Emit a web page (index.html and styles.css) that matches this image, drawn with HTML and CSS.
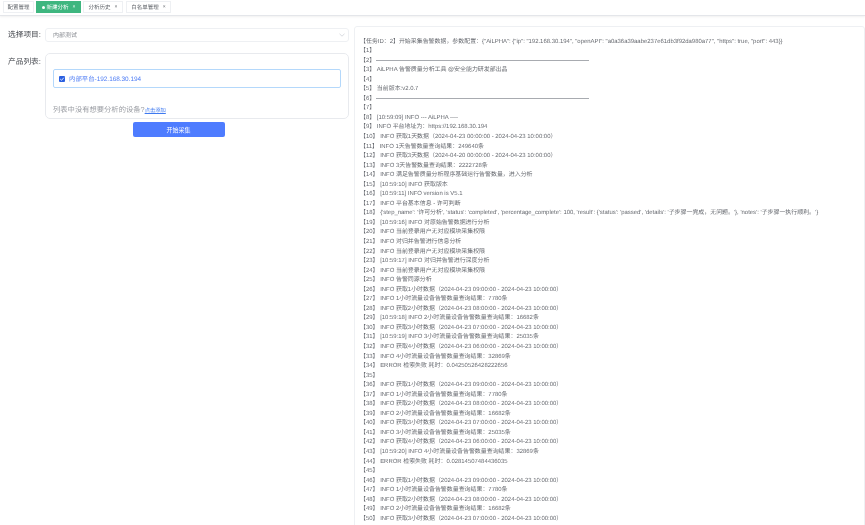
FILE: index.html
```html
<!DOCTYPE html>
<html lang="zh">
<head>
<meta charset="utf-8">
<title>新建分析</title>
<link rel="stylesheet" href="styles.css">
</head>
<body>
<nav class="tabs">
  <div class="tab tab-plain">配置管理</div>
  <div class="tab tab-active"><span class="dot"></span>新建分析<span class="close">×</span></div>
  <div class="tab">分析历史<span class="close">×</span></div>
  <div class="tab">白名单管理<span class="close">×</span></div>
</nav>
<main class="content">
  <section class="left">
    <div class="field">
      <label class="label">选择项目:</label>
      <div class="select">
        <span>内部测试</span>
        <svg class="chev" width="6" height="4" viewBox="0 0 6 4"><path d="M0.5 0.8 L3 3.2 L5.5 0.8" fill="none" stroke="#c0c4cc" stroke-width="0.6"/></svg>
      </div>
    </div>
    <div class="field field-list">
      <label class="label">产品列表:</label>
      <div class="list">
        <div class="item">
          <span class="check"><svg width="6" height="6" viewBox="0 0 6 6"><path d="M1.2 3 L2.6 4.3 L4.8 1.7" fill="none" stroke="#fff" stroke-width="0.8"/></svg></span>
          <span class="item-text">内部平台-192.168.30.194</span>
        </div>
        <div class="hint">列表中没有想要分析的设备?<a class="link">点击添加</a></div>
      </div>
    </div>
    <div class="actions"><button class="btn">开始采集</button></div>
  </section>
  <section class="log">
    <div>【任务ID：2】开始采集告警数据，参数配置：{"AiLPHA": {"ip": "192.168.30.194", "openAPI": "a0a36a39aabe237e61db3f92da980a77", "https": true, "port": 443}}</div>
    <div>【1】</div>
    <div>【2】<span class="rule"></span></div>
    <div>【3】 AiLPHA 告警质量分析工具 @安全能力研发部出品</div>
    <div>【4】</div>
    <div>【5】 当前版本:v2.0.7</div>
    <div>【6】<span class="rule"></span></div>
    <div>【7】</div>
    <div>【8】 [10:59:09] INFO --- AiLPHA ----</div>
    <div>【9】 INFO 平台地址为：https://192.168.30.194</div>
    <div>【10】 INFO 获取1天数据（2024-04-23 00:00:00 - 2024-04-23 10:00:00）</div>
    <div>【11】 INFO 1天告警数量查询结果：249640条</div>
    <div>【12】 INFO 获取3天数据（2024-04-20 00:00:00 - 2024-04-23 10:00:00）</div>
    <div>【13】 INFO 3天告警数量查询结果：2222728条</div>
    <div>【14】 INFO 满足告警质量分析程序基础运行告警数量，进入分析</div>
    <div>【15】 [10:59:10] INFO 获取版本</div>
    <div>【16】 [10:59:11] INFO version is V5.1</div>
    <div>【17】 INFO 平台基本信息 - 许可判断</div>
    <div>【18】 {'step_name': '许可分析', 'status': 'completed', 'percentage_complete': 100, 'result': {'status': 'passed', 'details': '子步骤一完成，无问题。'}, 'notes': '子步骤一执行顺利。'}</div>
    <div>【19】 [10:59:16] INFO 对原始告警数据进行分析</div>
    <div>【20】 INFO 当前登录用户无对应模块采集权限</div>
    <div>【21】 INFO 对归并告警进行信息分析</div>
    <div>【22】 INFO 当前登录用户无对应模块采集权限</div>
    <div>【23】 [10:59:17] INFO 对归并告警进行深度分析</div>
    <div>【24】 INFO 当前登录用户无对应模块采集权限</div>
    <div>【25】 INFO 告警同源分析</div>
    <div>【26】 INFO 获取1小时数据（2024-04-23 09:00:00 - 2024-04-23 10:00:00）</div>
    <div>【27】 INFO 1小时流量设备告警数量查询结果：7780条</div>
    <div>【28】 INFO 获取2小时数据（2024-04-23 08:00:00 - 2024-04-23 10:00:00）</div>
    <div>【29】 [10:59:18] INFO 2小时流量设备告警数量查询结果：16682条</div>
    <div>【30】 INFO 获取3小时数据（2024-04-23 07:00:00 - 2024-04-23 10:00:00）</div>
    <div>【31】 [10:59:19] INFO 3小时流量设备告警数量查询结果：25035条</div>
    <div>【32】 INFO 获取4小时数据（2024-04-23 06:00:00 - 2024-04-23 10:00:00）</div>
    <div>【33】 INFO 4小时流量设备告警数量查询结果：32869条</div>
    <div>【34】 ERROR 检索失败 耗时：0.04250526428222656</div>
    <div>【35】</div>
    <div>【36】 INFO 获取1小时数据（2024-04-23 09:00:00 - 2024-04-23 10:00:00）</div>
    <div>【37】 INFO 1小时流量设备告警数量查询结果：7780条</div>
    <div>【38】 INFO 获取2小时数据（2024-04-23 08:00:00 - 2024-04-23 10:00:00）</div>
    <div>【39】 INFO 2小时流量设备告警数量查询结果：16682条</div>
    <div>【40】 INFO 获取3小时数据（2024-04-23 07:00:00 - 2024-04-23 10:00:00）</div>
    <div>【41】 INFO 3小时流量设备告警数量查询结果：25035条</div>
    <div>【42】 INFO 获取4小时数据（2024-04-23 06:00:00 - 2024-04-23 10:00:00）</div>
    <div>【43】 [10:59:20] INFO 4小时流量设备告警数量查询结果：32869条</div>
    <div>【44】 ERROR 检索失败 耗时：0.02814507484436035</div>
    <div>【45】</div>
    <div>【46】 INFO 获取1小时数据（2024-04-23 09:00:00 - 2024-04-23 10:00:00）</div>
    <div>【47】 INFO 1小时流量设备告警数量查询结果：7780条</div>
    <div>【48】 INFO 获取2小时数据（2024-04-23 08:00:00 - 2024-04-23 10:00:00）</div>
    <div>【49】 INFO 2小时流量设备告警数量查询结果：16682条</div>
    <div>【50】 INFO 获取3小时数据（2024-04-23 07:00:00 - 2024-04-23 10:00:00）</div>
  </section>
</main>
</body>
</html>
```
FILE: styles.css
```css
* { box-sizing: border-box; }
html, body { margin: 0; height: 100%; overflow: hidden; }
body {
  background: #fff;
  color: #606266;
  font-family: "Liberation Sans", "Noto Sans CJK SC", sans-serif;
  text-rendering: geometricPrecision;
  filter: blur(0.3px);
}
.tabs {
  display: flex;
  align-items: flex-start;
  gap: 2px;
  height: 16px;
  padding: 1px 0 0 3px;
  border-bottom: 1px solid #e4e6ea;
  box-shadow: 0 1px 2px rgba(0,0,0,.06);
}
.tab {
  display: flex;
  align-items: center;
  justify-content: center;
  height: 12px;
  border: 1px solid #eef0f3;
  font-size: 5.5px;
  color: #5c6066;
  white-space: nowrap;
}
.tab-plain { width: 31px; }
.tab:nth-child(2) { width: 45px; }
.tab:nth-child(3) { width: 40px; }
.tab:nth-child(4) { width: 45px; margin-left: 1px; }
.tab-active { background: #3eb67f; border-color: #3eb67f; color: #fff; }
.dot { width: 3px; height: 3px; border-radius: 50%; background: #fff; margin-right: 2px; }
.close { margin-left: 4px; font-size: 5px; }
.content {
  display: flex;
  align-items: flex-start;
  gap: 5px;
  padding: 10px 0 0 8px;
}
.left { width: 341px; flex: none; padding-top: 1px; }
.field { display: flex; align-items: center; }
.field-list { align-items: flex-start; margin-top: 11px; }
.label { width: 37px; flex: none; padding-top: 1px; font-size: 7.7px; line-height: 14px; color: #45484e; }
.field-list .label { line-height: 10px; padding-top: 4px; }
.select {
  flex: 1;
  height: 14px;
  display: flex;
  align-items: center;
  justify-content: space-between;
  padding: 0 3px 0 7px;
  border: 1px solid #eef0f3;
  border-radius: 3px;
  font-size: 6px;
  color: #8a8d93;
}
.list {
  flex: 1;
  height: 66px;
  padding: 15px 7px 0 7px;
  border: 1px solid #e8eaee;
  border-radius: 5px;
}
.item {
  display: flex;
  align-items: center;
  gap: 4px;
  height: 19px;
  padding-left: 5px;
  border: 1px solid #b4d8fb;
  border-radius: 2px;
}
.check {
  width: 6px;
  height: 6px;
  display: flex;
  background: #2a5fe0;
  border-radius: 1px;
}
.item-text { font-size: 6.4px; color: #4d7cf5; }
.hint { margin-top: 17px; font-size: 7.3px; line-height: 10px; color: #9a9da3; white-space: nowrap; }
.link { font-size: 5.3px; color: #3f7af0; text-decoration: underline; }
.actions { display: flex; justify-content: center; margin-top: 3px; }
.btn {
  width: 92px;
  height: 15px;
  padding: 0;
  border: 0;
  border-radius: 2px;
  background: #4e7cff;
  color: #fff;
  font: 6px "Liberation Sans", "Noto Sans CJK SC", sans-serif;
}
.log {
  flex: 1;
  min-width: 0;
  height: 520px;
  padding: 10.5px 0 0 5px;
  border: 1px solid #eef0f3;
  border-radius: 3px 3px 0 0;
  font-size: 5.95px;
  line-height: 9.54px;
  color: #66696f;
  white-space: nowrap;
}
.rule {
  display: inline-block;
  width: 213px;
  margin-left: 1px;
  vertical-align: 1px;
  border-bottom: 1px solid #a8abb0;
}
```
